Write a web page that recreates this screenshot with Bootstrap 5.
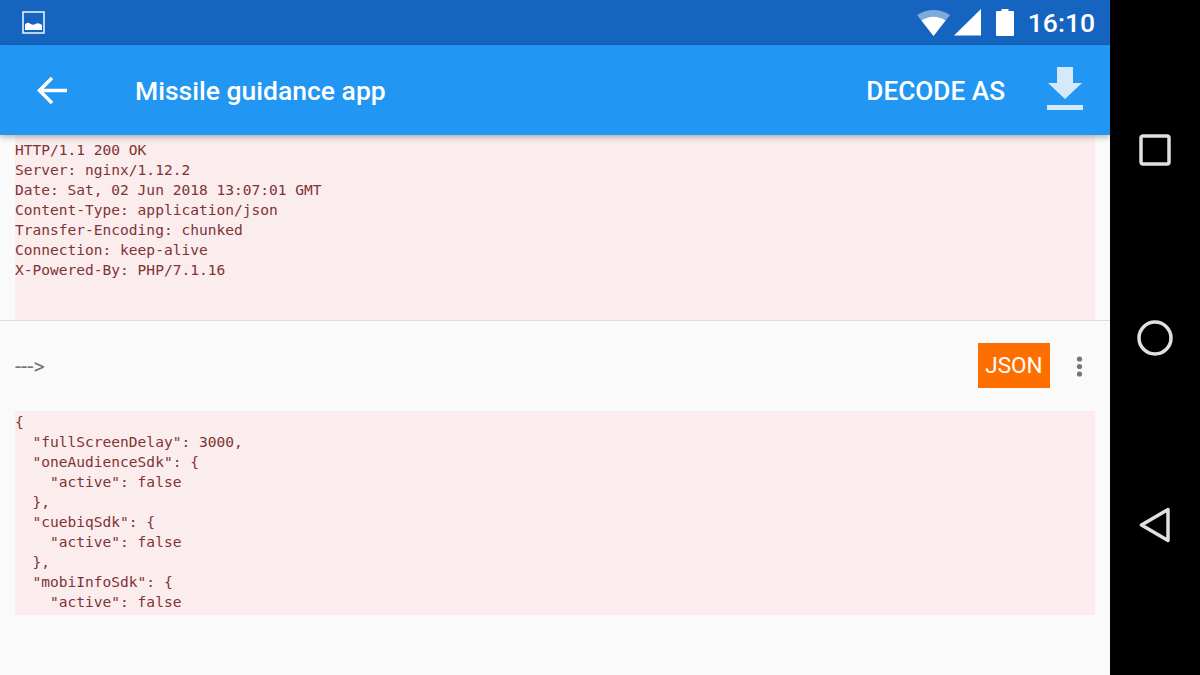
<!DOCTYPE html>
<html lang="en">
<head>
<meta charset="utf-8">
<title>Missile guidance app</title>
<link href="https://cdn.jsdelivr.net/npm/bootstrap@5.3.0/dist/css/bootstrap.min.css" rel="stylesheet">
<style>
html,body{height:100%;margin:0;overflow:hidden;background:#000}
.shell{width:1200px;height:675px}
.screen{width:1110px;background:#fafafa;font-family:Roboto,sans-serif}
.statusbar{height:45px;background:#1565c0;color:#fff;padding:0 15px 0 22px}
.clock{font-size:26.500px;font-weight:500;line-height:47px;margin-left:14px}
.icon-signal{margin-left:4px}
.icon-battery{margin-left:15px}
.appbar{height:90px;background:#2196f3;color:#fff;box-shadow:0 2px 6px rgba(0,0,0,.3);position:relative;z-index:2;padding:0 27px 0 37px}
.apptitle{font-size:26.500px;font-weight:500;margin-left:67px;line-height:1;padding-top:2px}
.action{font-size:26.200px;font-weight:500;line-height:1;margin-right:42px;padding-top:2px}
.icon-download{margin-bottom:3px}
.payload{font-family:"DejaVu Sans Mono",monospace;font-size:14.550px;line-height:20px;color:#7f3336;background:#fbeded;margin:0 15px;white-space:pre;overflow:hidden}
.head-block{height:185px;padding-top:5px}
.rowbar{height:91px;border-top:1px solid #dcdcdc;padding:0 27px 0 15px}
.arrowtext{font-size:22px;line-height:1;color:#757575;padding-top:2px}
.jsonchip{width:72px;height:45px;background:#ff6f00;color:#fff;font-size:22.500px;margin-right:26px;margin-bottom:1px}
.body-block{height:204px;padding-top:1px}
.navside{width:90px;background:#000}
.nav-a{margin-top:134px}.nav-b{margin-top:154px}.nav-c{margin-top:151px}
</style>
</head>
<body>
<div class="shell d-flex">
  <div class="screen d-flex flex-column">
    <div class="statusbar d-flex align-items-center">
      <svg width="23" height="23" viewBox="0 0 23 23"><rect x="1" y="1" width="21" height="21" fill="none" stroke="#e3eefa" stroke-width="1.6"/><path d="M3 19v-5.500q2-2.500 4-1.500t3 1.500q2 .5 3.500-.5t3.500-.5 3 1.500V19z" fill="#fff"/></svg>
      <div class="flex-grow-1"></div>
      <svg width="33" height="27" viewBox="0 0 33 27"><path d="M0 6Q16.500-4 33 6L16.500 27z" fill="#fff" fill-opacity=".45"/><path d="M4.500 11.500Q16.500 4 28.500 11.500L16.500 27z" fill="#fff"/></svg>
      <svg class="icon-signal" width="27" height="27" viewBox="0 0 27 27"><path d="M0 26.500 27 0v26.500z" fill="#fff"/></svg>
      <svg class="icon-battery" width="18" height="27" viewBox="0 0 18 27"><path d="M5.500 0h7v2h4.500a1 1 0 0 1 1 1v23a1 1 0 0 1-1 1H1a1 1 0 0 1-1-1V3a1 1 0 0 1 1-1h4.500z" fill="#fff"/></svg>
      <span class="clock">16:10</span>
    </div>
    <div class="appbar d-flex align-items-center">
      <svg width="31" height="31" viewBox="0 0 31 31"><path d="M30 15.500H3M15 3 2.500 15.500 15 28" fill="none" stroke="#fff" stroke-width="3.500"/></svg>
      <span class="apptitle">Missile guidance app</span>
      <div class="flex-grow-1"></div>
      <span class="action">DECODE AS</span>
      <svg class="icon-download" width="36" height="43" viewBox="0 0 36 43"><path d="M10 0h16v16h9L18 32 1 16h9zM0 38h36v5H0z" fill="#d6e9fb"/></svg>
    </div>
    <div class="payload head-block">HTTP/1.1 200 OK
Server: nginx/1.12.2
Date: Sat, 02 Jun 2018 13:07:01 GMT
Content-Type: application/json
Transfer-Encoding: chunked
Connection: keep-alive
X-Powered-By: PHP/7.1.16</div>
    <div class="rowbar d-flex align-items-center">
      <span class="arrowtext flex-grow-1">---&gt;</span>
      <div class="jsonchip d-flex align-items-center justify-content-center">JSON</div>
      <svg width="7" height="21" viewBox="0 0 7 21"><circle cx="3.500" cy="3" r="2.600" fill="#757575"/><circle cx="3.500" cy="10.500" r="2.600" fill="#757575"/><circle cx="3.500" cy="18" r="2.600" fill="#757575"/></svg>
    </div>
    <div class="payload body-block">{
  "fullScreenDelay": 3000,
  "oneAudienceSdk": {
    "active": false
  },
  "cuebiqSdk": {
    "active": false
  },
  "mobiInfoSdk": {
    "active": false</div>
  </div>
  <div class="navside d-flex flex-column align-items-center">
    <svg class="nav-a" width="32" height="32" viewBox="0 0 32 32"><rect x="2" y="2" width="28" height="28" rx="2" fill="none" stroke="#e0e0e0" stroke-width="3.500"/></svg>
    <svg class="nav-b" width="36" height="36" viewBox="0 0 36 36"><circle cx="18" cy="18" r="16" fill="none" stroke="#e0e0e0" stroke-width="3.500"/></svg>
    <svg class="nav-c" width="32" height="36" viewBox="0 0 32 36"><path d="M29 2.500V33.500L2.500 18z" fill="none" stroke="#e0e0e0" stroke-width="3.500" stroke-linejoin="round"/></svg>
  </div>
</div>
<script src="https://cdn.jsdelivr.net/npm/bootstrap@5.3.0/dist/js/bootstrap.bundle.min.js"></script>
</body>
</html>
